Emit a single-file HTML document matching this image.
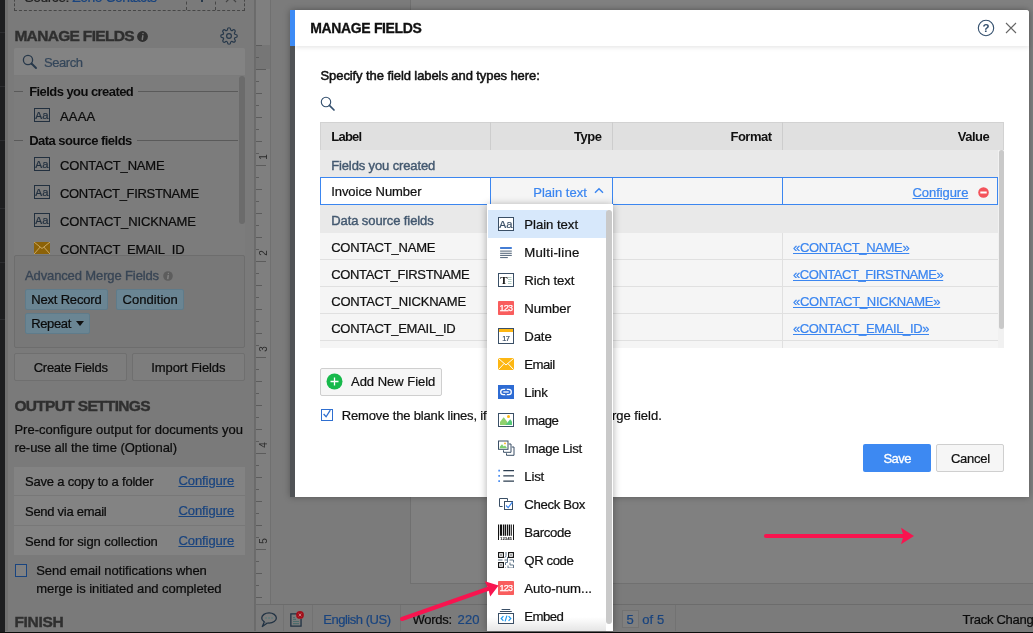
<!DOCTYPE html>
<html lang="en">
<head>
<meta charset="utf-8">
<title>Manage Fields</title>
<style>
*{box-sizing:border-box;margin:0;padding:0}
html,body{width:1033px;height:633px;overflow:hidden}
body{position:relative;background:#7b7b7b;font-family:"Liberation Sans",sans-serif;font-size:14px;color:#000}
#app{position:absolute;left:0;top:0;width:1033px;height:633px;overflow:hidden;will-change:transform}
.a{position:absolute}
.t{position:absolute;white-space:nowrap;line-height:18px}
</style>
</head>
<body>
<div id="app">
<!-- background application (dimmed) -->
<div class="a" style="left:0px;top:0px;width:5px;height:633px;background:#1d1e20"></div>
<div class="a" style="left:0px;top:32px;width:5px;height:1px;background:#2b2c2f"></div>
<div class="a" style="left:0px;top:86px;width:5px;height:1px;background:#2b2c2f"></div>
<div class="a" style="left:0px;top:140px;width:5px;height:1px;background:#2b2c2f"></div>
<div class="a" style="left:0px;top:208px;width:5px;height:1px;background:#2b2c2f"></div>
<div class="a" style="left:0px;top:262px;width:5px;height:1px;background:#2b2c2f"></div>
<div class="a" style="left:0px;top:319px;width:5px;height:1px;background:#2b2c2f"></div>
<div class="a" style="left:5px;top:0px;width:250px;height:631px;background:#7a7a7a;border-right:1px solid #6b6b6b"></div>
<div class="a" style="left:5px;top:0px;width:3px;height:631px;background:#707070"></div>
<div class="a" style="left:14px;top:-20px;width:231px;height:31px;border:1px dashed #474747"></div>
<div class="a" style="left:186px;top:-20px;width:1px;height:30px;border-left:1px dashed #474747"></div>
<div class="a" style="left:215px;top:-20px;width:1px;height:30px;border-left:1px dashed #474747"></div>
<div class="t" style="left:24.40px;top:-12.30px;font-size:14px;letter-spacing:-0.533px;color:#222;-webkit-text-stroke:0.22px;">Source: <span style="color:#19447f">Zoho Contacts</span></div><div class="a" style="left:201px;top:-4px;width:2px;height:6px;background:#27384a"></div>
<svg class="a" style="left:222.5px;top:-5px;" width="16" height="8" viewBox="0 0 16 8"><path d="M3 -3 L13 7 M13 -3 L3 7" stroke="#444" stroke-width="1.2" fill="none"/></svg>
<div class="t" style="left:14.40px;top:26.90px;font-size:15.5px;letter-spacing:-0.678px;font-weight:bold;color:#2f2f2f;-webkit-text-stroke:0.4px">MANAGE FIELDS</div><svg class="a" style="left:136.5px;top:30.5px;" width="11" height="11" viewBox="0 0 11 11"><circle cx="5.5" cy="5.5" r="5.4" fill="#2f2f2f"/><path d="M6 2.600 L6 2.600 M5.800 4.800 L5.300 8.400" stroke="#7a7a7a" stroke-width="1.5" stroke-linecap="round"/></svg>
<svg class="a" style="left:220px;top:27px;" width="18" height="18" viewBox="0 0 24 24"><g fill="none" stroke="#27384a" stroke-width="1.600" stroke-linejoin="round"><circle cx="12" cy="12" r="3.200"/><path d="M19.4 15a1.650 1.650 0 0 0 .33 1.820l.06.06a2 2 0 1 1-2.830 2.830l-.06-.06a1.650 1.650 0 0 0-1.820-.33 1.650 1.650 0 0 0-1 1.510V21a2 2 0 0 1-4 0v-.09A1.650 1.650 0 0 0 9 19.4a1.650 1.650 0 0 0-1.820.33l-.06.06a2 2 0 1 1-2.830-2.830l.06-.06a1.650 1.650 0 0 0 .33-1.820 1.650 1.650 0 0 0-1.510-1H3a2 2 0 0 1 0-4h.09A1.650 1.650 0 0 0 4.600 9a1.650 1.650 0 0 0-.33-1.820l-.06-.06a2 2 0 1 1 2.830-2.830l.06.06a1.650 1.650 0 0 0 1.820.33H9a1.650 1.650 0 0 0 1-1.510V3a2 2 0 0 1 4 0v.09a1.650 1.650 0 0 0 1 1.510 1.650 1.650 0 0 0 1.820-.33l.06-.06a2 2 0 1 1 2.830 2.830l-.06.06a1.650 1.650 0 0 0-.33 1.820V9a1.650 1.650 0 0 0 1.510 1H21a2 2 0 0 1 0 4h-.09a1.650 1.650 0 0 0-1.510 1z"/></g></svg>
<div class="a" style="left:14px;top:48px;width:231px;height:27px;background:#838383;border-radius:2px 2px 0 0"></div>
<div class="a" style="left:14px;top:75px;width:231px;height:1px;background:#7b7b7b"></div>
<svg class="a" style="left:22px;top:54px;" width="16" height="16" viewBox="0 0 16 16"><circle cx="6" cy="6" r="4.600" fill="none" stroke="#27384a" stroke-width="1.300"/><path d="M9.500 9.500 L14 14" stroke="#27384a" stroke-width="1.900" stroke-linecap="round"/></svg>
<div class="t" style="left:44.00px;top:53.70px;font-size:13px;letter-spacing:-0.451px;color:#34465a;-webkit-text-stroke:0.22px;">Search</div><div class="a" style="left:14px;top:76px;width:231px;height:179px;background:#7c7c7c"></div>
<div class="a" style="left:239.2px;top:76px;width:5.5px;height:148px;background:#6b6b6b;border-radius:3px"></div>
<div class="a" style="left:14px;top:91px;width:9px;height:1px;background:#5a5a5a"></div>
<div class="a" style="left:138px;top:91px;width:100px;height:1px;background:#5a5a5a"></div>
<div class="t" style="left:29.20px;top:82.70px;font-size:13px;letter-spacing:-0.564px;font-weight:bold;color:#0b0b0b;-webkit-text-stroke:0">Fields you created</div><div class="a" style="left:14px;top:140px;width:9px;height:1px;background:#5a5a5a"></div>
<div class="a" style="left:137px;top:140px;width:101px;height:1px;background:#5a5a5a"></div>
<div class="t" style="left:29.20px;top:131.70px;font-size:13px;letter-spacing:-0.522px;font-weight:bold;color:#0b0b0b;">Data source fields</div><svg class="a" style="left:34px;top:108px;" width="16" height="14" viewBox="0 0 16 14"><rect x=".5" y=".5" width="15" height="13" fill="none" stroke="#22303f" stroke-width="1"/><text x="1.300" y="10.700" font-family="Liberation Mono, monospace" font-size="11.500" fill="#22303f" stroke="#22303f" stroke-width=".2" letter-spacing="-0.2">Aa</text></svg>
<div class="t" style="left:60.00px;top:107.70px;font-size:13px;letter-spacing:0.203px;color:#0b0b0b;-webkit-text-stroke:0.22px;">AAAA</div><svg class="a" style="left:34px;top:157px;" width="16" height="14" viewBox="0 0 16 14"><rect x=".5" y=".5" width="15" height="13" fill="none" stroke="#22303f" stroke-width="1"/><text x="1.300" y="10.700" font-family="Liberation Mono, monospace" font-size="11.500" fill="#22303f" stroke="#22303f" stroke-width=".2" letter-spacing="-0.2">Aa</text></svg>
<div class="t" style="left:60.00px;top:156.70px;font-size:13px;letter-spacing:-0.180px;color:#0b0b0b;-webkit-text-stroke:0.22px;">CONTACT_NAME</div><svg class="a" style="left:34px;top:185px;" width="16" height="14" viewBox="0 0 16 14"><rect x=".5" y=".5" width="15" height="13" fill="none" stroke="#22303f" stroke-width="1"/><text x="1.300" y="10.700" font-family="Liberation Mono, monospace" font-size="11.500" fill="#22303f" stroke="#22303f" stroke-width=".2" letter-spacing="-0.2">Aa</text></svg>
<div class="t" style="left:60.00px;top:184.70px;font-size:13px;letter-spacing:-0.319px;color:#0b0b0b;-webkit-text-stroke:0.22px;">CONTACT_FIRSTNAME</div><svg class="a" style="left:34px;top:213px;" width="16" height="14" viewBox="0 0 16 14"><rect x=".5" y=".5" width="15" height="13" fill="none" stroke="#22303f" stroke-width="1"/><text x="1.300" y="10.700" font-family="Liberation Mono, monospace" font-size="11.500" fill="#22303f" stroke="#22303f" stroke-width=".2" letter-spacing="-0.2">Aa</text></svg>
<div class="t" style="left:60.00px;top:212.70px;font-size:13px;letter-spacing:-0.120px;color:#0b0b0b;-webkit-text-stroke:0.22px;">CONTACT_NICKNAME</div><svg class="a" style="left:34px;top:242px;" width="16" height="12" viewBox="0 0 16 12"><rect width="16" height="12" fill="#8c6208"/><path d="M0 0 L8 6.500 L16 0 M0 12 L6.200 5 M16 12 L9.800 5" stroke="#c9a866" stroke-width="1" fill="none"/></svg>
<div class="t" style="left:60.00px;top:240.70px;font-size:13px;letter-spacing:-0.253px;color:#0b0b0b;-webkit-text-stroke:0.22px;">CONTACT_EMAIL_ID</div><div class="a" style="left:14px;top:255px;width:231px;height:93px;background:#787878;border:1px solid #6d6d6d;border-radius:2px"></div>
<div class="t" style="left:25.00px;top:267.20px;font-size:13px;letter-spacing:-0.123px;color:#384555;-webkit-text-stroke:0.35px #384555">Advanced Merge Fields</div><svg class="a" style="left:162.5px;top:270.5px;" width="10" height="10" viewBox="0 0 10 10"><circle cx="5" cy="5" r="4.800" fill="#5d5d5d"/><path d="M5.400 2.300 L5.400 2.300 M5.200 4.300 L4.800 7.600" stroke="#8a8a8a" stroke-width="1.300" stroke-linecap="round"/></svg>
<div class="a" style="left:25px;top:289px;width:83px;height:21px;background:#6a8593;border:1px solid #5f7b8a;border-radius:2px"></div>
<div class="t" style="left:31.20px;top:291.20px;font-size:13px;letter-spacing:-0.177px;color:#0b0b0b;-webkit-text-stroke:0.22px;">Next Record</div><div class="a" style="left:116px;top:289px;width:68px;height:21px;background:#6a8593;border:1px solid #5f7b8a;border-radius:2px"></div>
<div class="t" style="left:122.50px;top:291.20px;font-size:13px;letter-spacing:0.051px;color:#0b0b0b;-webkit-text-stroke:0.22px;">Condition</div><div class="a" style="left:25px;top:313px;width:65px;height:21px;background:#6a8593;border:1px solid #5f7b8a;border-radius:2px"></div>
<div class="t" style="left:31.20px;top:315.20px;font-size:13px;letter-spacing:-0.354px;color:#0b0b0b;-webkit-text-stroke:0.22px;">Repeat</div><svg class="a" style="left:76.3px;top:321.3px;" width="8" height="5" viewBox="0 0 8 5"><path d="M0 0 H8 L4 5 Z" fill="#111"/></svg>
<div class="a" style="left:14px;top:353px;width:112.5px;height:28px;background:#7d7d7d;border:1px solid #6f6f6f;border-radius:2px"></div>
<div class="t" style="left:33.70px;top:359.20px;font-size:13px;letter-spacing:-0.255px;color:#0b0b0b;-webkit-text-stroke:0.22px;">Create Fields</div><div class="a" style="left:132px;top:353px;width:113px;height:28px;background:#7d7d7d;border:1px solid #6f6f6f;border-radius:2px"></div>
<div class="t" style="left:151.20px;top:359.20px;font-size:13px;letter-spacing:-0.065px;color:#0b0b0b;-webkit-text-stroke:0.22px;">Import Fields</div><div class="t" style="left:14.40px;top:396.90px;font-size:15.5px;letter-spacing:-0.670px;font-weight:bold;color:#2f2f2f;-webkit-text-stroke:0.4px">OUTPUT SETTINGS</div><div class="t" style="left:14.40px;top:421.20px;font-size:13px;letter-spacing:0.004px;color:#0b0b0b;-webkit-text-stroke:0.22px;">Pre-configure output for documents you</div><div class="t" style="left:14.40px;top:439.20px;font-size:13px;letter-spacing:-0.047px;color:#0b0b0b;-webkit-text-stroke:0.22px;">re-use all the time (Optional)</div><div class="a" style="left:14px;top:467px;width:231px;height:88px;background:#838383"></div>
<div class="a" style="left:14px;top:495px;width:231px;height:1px;background:#787878"></div>
<div class="a" style="left:14px;top:525px;width:231px;height:1px;background:#787878"></div>
<div class="t" style="left:25.00px;top:472.70px;font-size:13px;letter-spacing:-0.204px;color:#0b0b0b;-webkit-text-stroke:0.22px;">Save a copy to a folder</div><div class="t" style="left:178.40px;top:472.20px;font-size:13px;letter-spacing:-0.064px;color:#19447f;-webkit-text-stroke:0.22px;text-decoration:underline">Configure</div><div class="t" style="left:25.00px;top:502.70px;font-size:13px;letter-spacing:-0.270px;color:#0b0b0b;-webkit-text-stroke:0.22px;">Send via email</div><div class="t" style="left:178.40px;top:502.20px;font-size:13px;letter-spacing:-0.064px;color:#19447f;-webkit-text-stroke:0.22px;text-decoration:underline">Configure</div><div class="t" style="left:25.00px;top:532.70px;font-size:13px;letter-spacing:-0.068px;color:#0b0b0b;-webkit-text-stroke:0.22px;">Send for sign collection</div><div class="t" style="left:178.40px;top:532.20px;font-size:13px;letter-spacing:-0.064px;color:#19447f;-webkit-text-stroke:0.22px;text-decoration:underline">Configure</div><div class="a" style="left:14.5px;top:564px;width:12.5px;height:12.5px;border:1px solid #19447f;background:#818181"></div>
<div class="t" style="left:36.20px;top:562.20px;font-size:13px;letter-spacing:-0.048px;color:#0b0b0b;-webkit-text-stroke:0.22px;">Send email notifications when</div><div class="t" style="left:36.20px;top:580.20px;font-size:13px;letter-spacing:-0.058px;color:#0b0b0b;-webkit-text-stroke:0.22px;">merge is initiated and completed</div><div class="t" style="left:14.40px;top:612.90px;font-size:15.5px;letter-spacing:-0.302px;font-weight:bold;color:#2f2f2f;-webkit-text-stroke:0.4px">FINISH</div><div class="a" style="left:255px;top:0px;width:16px;height:604px;background:#7f7f7f;border-left:1px solid #6c6c6c;border-right:1px solid #707070"></div>
<div class="a" style="left:256px;top:45px;width:14px;height:24px;background:#767676"></div>
<div class="a" style="left:256px;top:44.5px;width:6px;height:1px;background:#5c5c5c"></div>
<div class="a" style="left:256px;top:56.5px;width:3px;height:1px;background:#5c5c5c"></div>
<div class="a" style="left:256px;top:68.5px;width:10px;height:1px;background:#5c5c5c"></div>
<div class="a" style="left:256px;top:80.5px;width:3px;height:1px;background:#5c5c5c"></div>
<div class="a" style="left:256px;top:92.5px;width:6px;height:1px;background:#5c5c5c"></div>
<div class="a" style="left:256px;top:104.5px;width:3px;height:1px;background:#5c5c5c"></div>
<div class="a" style="left:256px;top:116.5px;width:6px;height:1px;background:#5c5c5c"></div>
<div class="a" style="left:256px;top:128.5px;width:3px;height:1px;background:#5c5c5c"></div>
<div class="a" style="left:256px;top:140.5px;width:6px;height:1px;background:#5c5c5c"></div>
<div class="a" style="left:256px;top:152.5px;width:3px;height:1px;background:#5c5c5c"></div>
<div class="a" style="left:256px;top:164.5px;width:10px;height:1px;background:#5c5c5c"></div>
<div class="a" style="left:256px;top:176.5px;width:3px;height:1px;background:#5c5c5c"></div>
<div class="a" style="left:256px;top:188.5px;width:6px;height:1px;background:#5c5c5c"></div>
<div class="a" style="left:256px;top:200.5px;width:3px;height:1px;background:#5c5c5c"></div>
<div class="a" style="left:256px;top:212.5px;width:6px;height:1px;background:#5c5c5c"></div>
<div class="a" style="left:256px;top:224.5px;width:3px;height:1px;background:#5c5c5c"></div>
<div class="a" style="left:256px;top:236.5px;width:6px;height:1px;background:#5c5c5c"></div>
<div class="a" style="left:256px;top:248.5px;width:3px;height:1px;background:#5c5c5c"></div>
<div class="a" style="left:256px;top:260.5px;width:10px;height:1px;background:#5c5c5c"></div>
<div class="a" style="left:256px;top:272.5px;width:3px;height:1px;background:#5c5c5c"></div>
<div class="a" style="left:256px;top:284.5px;width:6px;height:1px;background:#5c5c5c"></div>
<div class="a" style="left:256px;top:296.5px;width:3px;height:1px;background:#5c5c5c"></div>
<div class="a" style="left:256px;top:308.5px;width:6px;height:1px;background:#5c5c5c"></div>
<div class="a" style="left:256px;top:320.5px;width:3px;height:1px;background:#5c5c5c"></div>
<div class="a" style="left:256px;top:332.5px;width:6px;height:1px;background:#5c5c5c"></div>
<div class="a" style="left:256px;top:344.5px;width:3px;height:1px;background:#5c5c5c"></div>
<div class="a" style="left:256px;top:356.5px;width:10px;height:1px;background:#5c5c5c"></div>
<div class="a" style="left:256px;top:368.5px;width:3px;height:1px;background:#5c5c5c"></div>
<div class="a" style="left:256px;top:380.5px;width:6px;height:1px;background:#5c5c5c"></div>
<div class="a" style="left:256px;top:392.5px;width:3px;height:1px;background:#5c5c5c"></div>
<div class="a" style="left:256px;top:404.5px;width:6px;height:1px;background:#5c5c5c"></div>
<div class="a" style="left:256px;top:416.5px;width:3px;height:1px;background:#5c5c5c"></div>
<div class="a" style="left:256px;top:428.5px;width:6px;height:1px;background:#5c5c5c"></div>
<div class="a" style="left:256px;top:440.5px;width:3px;height:1px;background:#5c5c5c"></div>
<div class="a" style="left:256px;top:452.5px;width:10px;height:1px;background:#5c5c5c"></div>
<div class="a" style="left:256px;top:464.5px;width:3px;height:1px;background:#5c5c5c"></div>
<div class="a" style="left:256px;top:476.5px;width:6px;height:1px;background:#5c5c5c"></div>
<div class="a" style="left:256px;top:488.5px;width:3px;height:1px;background:#5c5c5c"></div>
<div class="a" style="left:256px;top:500.5px;width:6px;height:1px;background:#5c5c5c"></div>
<div class="a" style="left:256px;top:512.5px;width:3px;height:1px;background:#5c5c5c"></div>
<div class="a" style="left:256px;top:524.5px;width:6px;height:1px;background:#5c5c5c"></div>
<div class="a" style="left:256px;top:536.5px;width:3px;height:1px;background:#5c5c5c"></div>
<div class="a" style="left:256px;top:548.5px;width:10px;height:1px;background:#5c5c5c"></div>
<div class="a" style="left:256px;top:560.5px;width:3px;height:1px;background:#5c5c5c"></div>
<div class="a" style="left:256px;top:572.5px;width:6px;height:1px;background:#5c5c5c"></div>
<div class="a" style="left:256px;top:584.5px;width:3px;height:1px;background:#5c5c5c"></div>
<div class="a" style="left:256px;top:596.5px;width:6px;height:1px;background:#5c5c5c"></div>
<div class="a" style="left:257px;top:149.5px;width:14px;height:14px;font-size:10px;line-height:14px;text-align:center;color:#2c2c2c;transform:rotate(-90deg)">1</div>
<div class="a" style="left:257px;top:245.5px;width:14px;height:14px;font-size:10px;line-height:14px;text-align:center;color:#2c2c2c;transform:rotate(-90deg)">2</div>
<div class="a" style="left:257px;top:341.5px;width:14px;height:14px;font-size:10px;line-height:14px;text-align:center;color:#2c2c2c;transform:rotate(-90deg)">3</div>
<div class="a" style="left:257px;top:437.5px;width:14px;height:14px;font-size:10px;line-height:14px;text-align:center;color:#2c2c2c;transform:rotate(-90deg)">4</div>
<div class="a" style="left:257px;top:533.5px;width:14px;height:14px;font-size:10px;line-height:14px;text-align:center;color:#2c2c2c;transform:rotate(-90deg)">5</div>
<div class="a" style="left:410px;top:-10px;width:700px;height:594px;background:#808080;border:1px solid #707070"></div>
<div class="a" style="left:255px;top:604px;width:778px;height:27px;background:#7b7b7b;border-top:1px solid #6c6c6c;border-left:1px solid #6c6c6c"></div>
<div class="a" style="left:283px;top:605px;width:1px;height:26px;background:#727272"></div>
<div class="a" style="left:312px;top:605px;width:1px;height:26px;background:#727272"></div>
<div class="a" style="left:400px;top:605px;width:1px;height:26px;background:#727272"></div>
<div class="a" style="left:675px;top:605px;width:1px;height:26px;background:#727272"></div>
<svg class="a" style="left:260px;top:610px;" width="18" height="18" viewBox="0 0 18 18"><ellipse cx="9.050" cy="7.950" rx="7.300" ry="5.100" fill="none" stroke="#213243" stroke-width="1.300"/><path d="M4.300 11.900 L2.300 16.500 L7.400 13" fill="#7b7b7b" stroke="#213243" stroke-width="1.300" stroke-linejoin="round"/><path d="M4.900 11.300 L7.600 12.300" stroke="#7b7b7b" stroke-width="1.600"/><path d="M5.300 8 H6.800 M8.300 8 H9.800 M11.300 8 H12.800" stroke="#587878" stroke-width="1.500"/></svg>
<svg class="a" style="left:289px;top:609px;" width="18" height="19" viewBox="0 0 18 19"><path d="M8 4.850 H1.850 V17.150 H12.050 V10" fill="none" stroke="#213243" stroke-width="1.300"/><path d="M4 8.500 H6 M4 10.400 H7 M4 12.500 H10 M4 14.600 H10" stroke="#4c6c6c" stroke-width="1.100"/><circle cx="11" cy="5.900" r="3.900" fill="#a30e1a"/><path d="M9.700 4.600 L12.300 7.200 M12.300 4.600 L9.700 7.200" stroke="#c88" stroke-width="1"/></svg>
<div class="t" style="left:323.20px;top:610.70px;font-size:13px;letter-spacing:-0.472px;color:#19447f;-webkit-text-stroke:0.22px;">English (US)</div><div class="t" style="left:412.50px;top:610.70px;font-size:13px;letter-spacing:-0.273px;color:#0b0b0b;-webkit-text-stroke:0.22px;">Words:</div><div class="t" style="left:457.50px;top:610.70px;font-size:13px;letter-spacing:0.199px;color:#19447f;-webkit-text-stroke:0.22px;">220</div><div class="a" style="left:621.5px;top:610px;width:17px;height:18px;border:1px solid #727272;background:#7f7f7f"></div>
<div class="t" style="left:626.50px;top:610.70px;font-size:13px;letter-spacing:0.266px;color:#19447f;-webkit-text-stroke:0.22px;">5</div><div class="t" style="left:642.20px;top:610.70px;font-size:13px;letter-spacing:0.153px;color:#19447f;-webkit-text-stroke:0.22px;">of 5</div><div class="t" style="left:962.50px;top:610.70px;font-size:13px;letter-spacing:-0.282px;color:#0b0b0b;-webkit-text-stroke:0.22px;">Track Changes</div><div class="a" style="left:0px;top:631.5px;width:1033px;height:2px;background:#0c0c0c"></div>
<!-- modal dialog -->
<div class="a" style="left:290px;top:10px;width:739px;height:487px;background:#fff;border-radius:0 3px 0 0;box-shadow:0 0 7px rgba(0,0,0,.3)"></div>
<div class="a" style="left:290px;top:10px;width:5px;height:487px;background:#505356"></div>
<div class="a" style="left:295px;top:10px;width:734px;height:36px;background:#fff;border-radius:0 3px 0 0;box-shadow:0 1px 5px rgba(0,0,0,.12)"></div>
<div class="a" style="left:290px;top:10px;width:5px;height:36px;background:#3d8bf5"></div>
<div class="t" style="left:310.30px;top:18.50px;font-size:14px;letter-spacing:-0.361px;font-weight:bold;color:#111;-webkit-text-stroke:0.3px">MANAGE FIELDS</div><svg class="a" style="left:977px;top:19px;" width="18" height="18" viewBox="0 0 18 18"><circle cx="9" cy="9" r="7.700" fill="none" stroke="#34506e" stroke-width="1.100"/><text x="9" y="13" text-anchor="middle" font-family="Liberation Sans, sans-serif" font-size="11.500" font-weight="bold" fill="#34506e">?</text></svg>
<svg class="a" style="left:1004px;top:21px;" width="14" height="14" viewBox="0 0 14 14"><path d="M2 2 L12 12 M12 2 L2 12" stroke="#666" stroke-width="1.100" fill="none"/></svg>
<div class="t" style="left:320.50px;top:67.20px;font-size:13px;letter-spacing:-0.085px;color:#111;-webkit-text-stroke:0.5px #111">Specify the field labels and types here:</div><svg class="a" style="left:320px;top:96px;" width="16" height="16" viewBox="0 0 16 16"><circle cx="6" cy="6" r="4.700" fill="none" stroke="#34506e" stroke-width="1.100"/><path d="M9.400 9.400 L14 14" stroke="#34506e" stroke-width="1.700" stroke-linecap="round"/></svg>
<div class="a" style="left:320px;top:122px;width:684px;height:28px;background:#e0e0e0;border:1px solid #d2d2d2;border-bottom:none"></div>
<div class="a" style="left:490px;top:122px;width:1px;height:28px;background:#cdcdcd"></div>
<div class="a" style="left:612px;top:122px;width:1px;height:28px;background:#cdcdcd"></div>
<div class="a" style="left:782px;top:122px;width:1px;height:28px;background:#cdcdcd"></div>
<div class="t" style="left:331.20px;top:127.70px;font-size:13px;letter-spacing:-0.734px;font-weight:bold;color:#111;">Label</div><div class="t" style="left:574.03px;top:127.70px;font-size:13px;letter-spacing:-0.473px;font-weight:bold;color:#111;">Type</div><div class="t" style="left:730.49px;top:127.70px;font-size:13px;letter-spacing:-0.510px;font-weight:bold;color:#111;">Format</div><div class="t" style="left:957.81px;top:127.70px;font-size:13px;letter-spacing:-0.494px;font-weight:bold;color:#111;">Value</div><div class="a" style="left:320px;top:150px;width:684px;height:198px;background:#f0f0f0"></div>
<div class="a" style="left:320px;top:150px;width:1px;height:198px;background:#dedede"></div>
<div class="a" style="left:320px;top:150px;width:678px;height:27px;background:#e9e9e9"></div>
<div class="t" style="left:331.20px;top:156.70px;font-size:13px;letter-spacing:-0.124px;color:#43586f;-webkit-text-stroke:0.4px">Fields you created</div><div class="a" style="left:320px;top:205px;width:678px;height:28px;background:#e9e9e9"></div>
<div class="t" style="left:331.20px;top:211.70px;font-size:13px;letter-spacing:-0.087px;color:#43586f;-webkit-text-stroke:0.4px">Data source fields</div><div class="a" style="left:320px;top:177px;width:678px;height:28px;background:#f5f5f5;border:1px solid #3b86f0"></div>
<div class="a" style="left:321px;top:178px;width:169px;height:26px;background:#fff"></div>
<div class="a" style="left:490px;top:177px;width:1px;height:28px;background:#3b86f0"></div>
<div class="a" style="left:612px;top:177px;width:1px;height:28px;background:#3b86f0"></div>
<div class="a" style="left:782px;top:177px;width:1px;height:28px;background:#3b86f0"></div>
<div class="t" style="left:331.20px;top:183.20px;font-size:13px;letter-spacing:-0.053px;color:#111;-webkit-text-stroke:0.22px;">Invoice Number</div><div class="t" style="left:533.30px;top:184.20px;font-size:13px;letter-spacing:0.002px;color:#3b86f0;-webkit-text-stroke:0.22px;">Plain text</div><svg class="a" style="left:594px;top:187px;" width="10" height="7" viewBox="0 0 10 7"><path d="M1 5.800 L5 1.700 L9 5.800" fill="none" stroke="#3b86f0" stroke-width="1.400"/></svg>
<div class="t" style="left:912.50px;top:184.00px;font-size:13px;letter-spacing:-0.064px;color:#3b86f0;-webkit-text-stroke:0.22px;text-decoration:underline">Configure</div><svg class="a" style="left:977.5px;top:186.5px;" width="11" height="11" viewBox="0 0 11 11"><circle cx="5.500" cy="5.500" r="5.300" fill="#f4545c"/><rect x="2.300" y="4.500" width="6.400" height="2" fill="#fff"/></svg>
<div class="a" style="left:320px;top:233px;width:678px;height:27px;background:#f5f5f5;border-bottom:1px solid #e0e0e0"></div>
<div class="a" style="left:490px;top:233px;width:1px;height:27px;background:#e0e0e0"></div>
<div class="a" style="left:612px;top:233px;width:1px;height:27px;background:#e0e0e0"></div>
<div class="a" style="left:782px;top:233px;width:1px;height:27px;background:#e0e0e0"></div>
<div class="t" style="left:331.20px;top:239.00px;font-size:13px;letter-spacing:-0.221px;color:#111;-webkit-text-stroke:0.22px;">CONTACT_NAME</div><div class="t" style="left:793.00px;top:239.00px;font-size:13px;letter-spacing:-0.345px;color:#3b86f0;-webkit-text-stroke:0.22px;text-decoration:underline">«CONTACT_NAME»</div><div class="a" style="left:320px;top:260px;width:678px;height:27px;background:#f5f5f5;border-bottom:1px solid #e0e0e0"></div>
<div class="a" style="left:490px;top:260px;width:1px;height:27px;background:#e0e0e0"></div>
<div class="a" style="left:612px;top:260px;width:1px;height:27px;background:#e0e0e0"></div>
<div class="a" style="left:782px;top:260px;width:1px;height:27px;background:#e0e0e0"></div>
<div class="t" style="left:331.20px;top:266.00px;font-size:13px;letter-spacing:-0.354px;color:#111;-webkit-text-stroke:0.22px;">CONTACT_FIRSTNAME</div><div class="t" style="left:793.00px;top:266.00px;font-size:13px;letter-spacing:-0.446px;color:#3b86f0;-webkit-text-stroke:0.22px;text-decoration:underline">«CONTACT_FIRSTNAME»</div><div class="a" style="left:320px;top:287px;width:678px;height:27px;background:#f5f5f5;border-bottom:1px solid #e0e0e0"></div>
<div class="a" style="left:490px;top:287px;width:1px;height:27px;background:#e0e0e0"></div>
<div class="a" style="left:612px;top:287px;width:1px;height:27px;background:#e0e0e0"></div>
<div class="a" style="left:782px;top:287px;width:1px;height:27px;background:#e0e0e0"></div>
<div class="t" style="left:331.20px;top:293.00px;font-size:13px;letter-spacing:-0.182px;color:#111;-webkit-text-stroke:0.22px;">CONTACT_NICKNAME</div><div class="t" style="left:793.00px;top:293.00px;font-size:13px;letter-spacing:-0.277px;color:#3b86f0;-webkit-text-stroke:0.22px;text-decoration:underline">«CONTACT_NICKNAME»</div><div class="a" style="left:320px;top:314px;width:678px;height:27px;background:#f5f5f5;border-bottom:1px solid #e0e0e0"></div>
<div class="a" style="left:490px;top:314px;width:1px;height:27px;background:#e0e0e0"></div>
<div class="a" style="left:612px;top:314px;width:1px;height:27px;background:#e0e0e0"></div>
<div class="a" style="left:782px;top:314px;width:1px;height:27px;background:#e0e0e0"></div>
<div class="t" style="left:331.20px;top:320.00px;font-size:13px;letter-spacing:-0.259px;color:#111;-webkit-text-stroke:0.22px;">CONTACT_EMAIL_ID</div><div class="t" style="left:793.00px;top:320.00px;font-size:13px;letter-spacing:-0.378px;color:#3b86f0;-webkit-text-stroke:0.22px;text-decoration:underline">«CONTACT_EMAIL_ID»</div><div class="a" style="left:320px;top:341px;width:678px;height:7px;background:#f5f5f5"></div>
<div class="a" style="left:490px;top:341px;width:1px;height:7px;background:#e0e0e0"></div>
<div class="a" style="left:612px;top:341px;width:1px;height:7px;background:#e0e0e0"></div>
<div class="a" style="left:782px;top:341px;width:1px;height:7px;background:#e0e0e0"></div>
<div class="a" style="left:998px;top:150px;width:6px;height:198px;background:#f1f1f1"></div>
<div class="a" style="left:998.5px;top:150px;width:5px;height:179px;background:#c9c9c9;border-radius:3px"></div>
<div class="a" style="left:320px;top:368px;width:122px;height:28px;background:#f6f6f6;border:1px solid #cfcfcf;border-radius:2px"></div>
<svg class="a" style="left:326.3px;top:373.1px;" width="17" height="17" viewBox="0 0 17 17"><circle cx="8.500" cy="8.500" r="8" fill="#17b94b"/><path d="M8.500 4.500 V12.500 M4.500 8.500 H12.500" stroke="#fff" stroke-width="1.300"/></svg>
<div class="t" style="left:351.00px;top:373.40px;font-size:13px;letter-spacing:-0.019px;color:#111;-webkit-text-stroke:0.22px;">Add New Field</div><div class="a" style="left:320.5px;top:409px;width:12.5px;height:11.8px;border:1px solid #2f6fd0;background:#fff"></div>
<svg class="a" style="left:322px;top:409px;" width="10" height="10" viewBox="0 0 10 10"><path d="M1.600 5 L4.100 7.800 L8.300 1.200" fill="none" stroke="#2f6fd0" stroke-width="1.300"/></svg>
<div class="t" style="left:341.80px;top:407.20px;font-size:13px;letter-spacing:-0.160px;color:#111;-webkit-text-stroke:0.22px;">Remove the blank lines, if</div><div class="t" style="left:490.00px;top:407.20px;font-size:13px;letter-spacing:-1.304px;color:#111;-webkit-text-stroke:0.22px;">any, after replacing the</div><div class="t" style="left:593.88px;top:407.20px;font-size:13px;letter-spacing:0.000px;color:#111;-webkit-text-stroke:0.22px;">merge field.</div><div class="a" style="left:863px;top:444px;width:68px;height:28px;background:#3d89f2;border-radius:2px"></div>
<div class="t" style="left:883.50px;top:449.70px;font-size:13px;letter-spacing:-0.585px;color:#fff;-webkit-text-stroke:0.3px #fff">Save</div><div class="a" style="left:936px;top:444px;width:68px;height:28px;background:#f6f6f6;border:1px solid #cfcfcf;border-radius:2px"></div>
<div class="t" style="left:951.00px;top:449.70px;font-size:13px;letter-spacing:-0.278px;color:#111;-webkit-text-stroke:0.22px;">Cancel</div><!-- type dropdown -->
<div class="a" style="left:487px;top:204px;width:126px;height:427px;background:#fff;box-shadow:0 1px 8px rgba(0,0,0,.32)"></div>
<div class="a" style="left:488px;top:210px;width:118.5px;height:28px;background:#d7e8fb"></div>
<div class="a" style="left:487px;top:617px;width:119px;height:14px;background:linear-gradient(rgba(0,0,0,0),rgba(0,0,0,.1))"></div>
<div class="a" style="left:606.2px;top:210px;width:5.5px;height:413.5px;background:#c9c9c9;border-radius:3px"></div>
<div class="t" style="left:524.30px;top:216.00px;font-size:13.2px;letter-spacing:-0.055px;color:#111;-webkit-text-stroke:0.22px;">Plain text</div><svg class="a" style="left:498px;top:217px;" width="16" height="14" viewBox="0 0 16 14"><rect x=".5" y=".5" width="15" height="13" fill="#fff" stroke="#3a4f66" stroke-width="1"/><text x="1.300" y="10.700" font-family="Liberation Mono, monospace" font-size="11.500" fill="#3a4f66" stroke="#3a4f66" stroke-width=".2" letter-spacing="-0.2">Aa</text></svg>
<div class="t" style="left:524.30px;top:244.03px;font-size:13.2px;letter-spacing:0.253px;color:#111;-webkit-text-stroke:0.22px;">Multi-line</div><svg class="a" style="left:498px;top:244px;" width="16" height="16" viewBox="0 0 16 16"><path d="M2.100 4 H13.800" stroke="#2f6fd0" stroke-width="1.800"/><path d="M2.100 7.100 H13.800 M2.100 9.300 H13.800 M2.100 11.400 H13.800 M2.100 13.600 H9.800" stroke="#3a4f66" stroke-width=".9"/></svg>
<div class="t" style="left:524.30px;top:272.06px;font-size:13.2px;letter-spacing:-0.157px;color:#111;-webkit-text-stroke:0.22px;">Rich text</div><svg class="a" style="left:498px;top:272px;" width="16" height="16" viewBox="0 0 16 16"><rect x=".5" y="1.500" width="15" height="13" fill="#fff" stroke="#3a4f66"/><text x="2.200" y="12.200" font-family="Liberation Serif, serif" font-weight="bold" font-size="11" fill="#111">T</text><path d="M10 5.500 H13.500 M10 7.500 H13.500 M10 9.500 H13.500 M10 11.500 H13.500" stroke="#9fc2b6" stroke-width=".8"/></svg>
<div class="t" style="left:524.30px;top:300.09px;font-size:13.2px;letter-spacing:-0.068px;color:#111;-webkit-text-stroke:0.22px;">Number</div><svg class="a" style="left:498px;top:300px;" width="16" height="16" viewBox="0 0 16 16"><rect x="0" y="1" width="16" height="14" rx=".8" fill="#f95d5d"/><text x="8" y="11.300" text-anchor="middle" font-family="Liberation Sans, sans-serif" font-size="9" fill="#fff" stroke="#fff" stroke-width=".25" letter-spacing="-0.75">123</text></svg>
<div class="t" style="left:524.30px;top:328.12px;font-size:13.2px;letter-spacing:-0.140px;color:#111;-webkit-text-stroke:0.22px;">Date</div><svg class="a" style="left:498px;top:328px;" width="16" height="16" viewBox="0 0 16 16"><rect x=".5" y=".5" width="15" height="15" fill="#fff" stroke="#3a4f66"/><rect x="1" y="1" width="14" height="3" fill="#fdb713"/><text x="7.800" y="13" text-anchor="middle" font-family="Liberation Sans, sans-serif" font-size="7.500" fill="#3a4f66" stroke="#3a4f66" stroke-width=".2" letter-spacing="-0.5">17</text></svg>
<div class="t" style="left:524.30px;top:356.15px;font-size:13.2px;letter-spacing:-0.537px;color:#111;-webkit-text-stroke:0.22px;">Email</div><svg class="a" style="left:498px;top:356px;" width="16" height="16" viewBox="0 0 16 16"><rect x="0" y="2" width="16" height="12" fill="#fdb713"/><path d="M.3 2.300 L8 9 L15.700 2.300 M.3 13.700 L6 7.600 M15.700 13.700 L10 7.600" stroke="#fff" stroke-width="1" fill="none"/></svg>
<div class="t" style="left:524.30px;top:384.18px;font-size:13.2px;letter-spacing:-0.226px;color:#111;-webkit-text-stroke:0.22px;">Link</div><svg class="a" style="left:498px;top:384px;" width="16" height="16" viewBox="0 0 16 16"><rect x="0" y="1" width="16" height="14" fill="#2d6bd3"/><rect x="2.700" y="5.400" width="10.600" height="5.200" rx="2.600" fill="none" stroke="#fff" stroke-width="1.300"/><path d="M5.300 8 H10.700" stroke="#fff" stroke-width="1.300"/><path d="M8 4.500 V6.300 M8 9.700 V11.500" stroke="#2d6bd3" stroke-width="1.600"/></svg>
<div class="t" style="left:524.30px;top:412.21px;font-size:13.2px;letter-spacing:-0.531px;color:#111;-webkit-text-stroke:0.22px;">Image</div><svg class="a" style="left:498px;top:412px;" width="16" height="16" viewBox="0 0 16 16"><rect x=".5" y="1.500" width="15" height="13" fill="#fff" stroke="#3a4f66"/><path d="M2 13 L2 10 L5.700 5.200 L9.200 9.800 L9.200 13 Z" fill="#8fd16d"/><path d="M7.300 13 L12.200 7.200 L14 9.500 L14 13 Z" fill="#56c878"/><circle cx="10.500" cy="4.400" r="1.500" fill="#fdb713"/></svg>
<div class="t" style="left:524.30px;top:440.24px;font-size:13.2px;letter-spacing:-0.334px;color:#111;-webkit-text-stroke:0.22px;">Image List</div><svg class="a" style="left:498px;top:440px;" width="17" height="17" viewBox="0 0 17 17"><path d="M8.500 13.300 V15.300 H16 V7 H13.800" fill="none" stroke="#3a4f66"/><path d="M5.500 10.300 V12.300 H13 V4 H10.800" fill="none" stroke="#3a4f66"/><rect x=".5" y="1" width="9.500" height="8.300" fill="#fff" stroke="#3a4f66"/><path d="M1.800 8.200 L1.800 6.800 L4 4.200 L5.800 6.500 L7 5.500 L8.700 7.500 L8.700 8.200 Z" fill="#7fcf70"/><circle cx="7" cy="3.400" r=".9" fill="#fdb713"/></svg>
<div class="t" style="left:524.30px;top:468.27px;font-size:13.2px;letter-spacing:-0.183px;color:#111;-webkit-text-stroke:0.22px;">List</div><svg class="a" style="left:498px;top:468px;" width="16" height="16" viewBox="0 0 16 16"><path d="M5.300 2.600 H16 M5.300 7.900 H16 M5.300 13.200 H16" stroke="#2c3e50" stroke-width="1.250"/><path d="M.3 2.600 H2 M.3 7.900 H2 M.3 13.200 H2" stroke="#4a8df0" stroke-width="1.700"/></svg>
<div class="t" style="left:524.30px;top:496.30px;font-size:13.2px;letter-spacing:-0.353px;color:#111;-webkit-text-stroke:0.22px;">Check Box</div><svg class="a" style="left:498px;top:496px;" width="16" height="16" viewBox="0 0 16 16"><path d="M4.600 10.500 H1.500 V2.500 H9.500 V4.800" fill="none" stroke="#3a4f66" stroke-width="1"/><rect x="6.500" y="5.500" width="8" height="8" fill="#fff" stroke="#3a4f66"/><path d="M8 9.500 L10.200 11.700 L14.500 5.900" fill="none" stroke="#3b86f0" stroke-width="1.100"/></svg>
<div class="t" style="left:524.30px;top:524.33px;font-size:13.2px;letter-spacing:-0.346px;color:#111;-webkit-text-stroke:0.22px;">Barcode</div><svg class="a" style="left:498px;top:524px;" width="16" height="17" viewBox="0 0 16 17"><path d="M.5 .5 V16" stroke="#111" stroke-width="1"/><path d="M3 .5 V11.800" stroke="#111" stroke-width="2.300"/><path d="M5.500 .5 V11.800" stroke="#111" stroke-width="1"/><path d="M7.400 .5 V11.800" stroke="#111" stroke-width="1.600"/><path d="M9.600 .5 V11.800" stroke="#111" stroke-width="1.200"/><path d="M11.500 .5 V11.800" stroke="#111" stroke-width="1.200"/><path d="M13.300 .5 V11.800" stroke="#111" stroke-width="1"/><path d="M15.500 .5 V16" stroke="#111" stroke-width="1"/><text x="8" y="16" text-anchor="middle" font-family="Liberation Sans, sans-serif" font-size="4.300" font-weight="bold" fill="#111">12345</text></svg>
<div class="t" style="left:524.30px;top:552.36px;font-size:13.2px;letter-spacing:-0.421px;color:#111;-webkit-text-stroke:0.22px;">QR code</div><svg class="a" style="left:498px;top:552px;" width="16" height="16" viewBox="0 0 16 16"><g fill="none" stroke="#111" stroke-width="1.150"><rect x=".6" y=".6" width="4.800" height="4.800"/><rect x="10.600" y=".6" width="4.800" height="4.800"/><rect x=".6" y="10.600" width="4.800" height="4.800"/></g><g fill="none" stroke="#5f7488" stroke-width="1"><path d="M8 0 V3.500 Q8 5.500 6.500 5.500 M0 8 H4.500 M6.500 8 H9.500 V5 M9.500 8 V10.500 H7.500 V13 M11.500 8 H15.500 V10.500 M12 10.500 V13 H15.500 V16 H10 V13.500 M7.500 15.500 H8"/></g><rect x="2.400" y="2.400" width="1.200" height="1.200" fill="#111"/><rect x="12.400" y="2.400" width="1.200" height="1.200" fill="#111"/><rect x="2.400" y="12.400" width="1.200" height="1.200" fill="#111"/></svg>
<div class="t" style="left:524.30px;top:580.39px;font-size:13.2px;letter-spacing:-0.052px;color:#111;-webkit-text-stroke:0.22px;">Auto-num...</div><svg class="a" style="left:498px;top:580px;" width="16" height="16" viewBox="0 0 16 16"><rect x="0" y="1" width="16" height="14" rx=".8" fill="#f95d5d"/><text x="8" y="11.300" text-anchor="middle" font-family="Liberation Sans, sans-serif" font-size="9" fill="#fff" stroke="#fff" stroke-width=".25" letter-spacing="-0.75">123</text></svg>
<div class="t" style="left:524.30px;top:608.42px;font-size:13.2px;letter-spacing:-0.559px;color:#111;-webkit-text-stroke:0.22px;">Embed</div><svg class="a" style="left:498px;top:608px;" width="16" height="17" viewBox="0 0 16 17"><path d="M3.600 1.500 H12.200 M1.900 3.500 H13.800" stroke="#3a4f66" stroke-width="1"/><rect x=".5" y="5.500" width="15" height="10" fill="#fff" stroke="#3a4f66"/><path d="M5.400 8.200 L3.200 10.500 L5.400 12.800 M10.600 8.200 L12.800 10.500 L10.600 12.800 M8.900 7.600 L7.100 13.400" fill="none" stroke="#1e9af0" stroke-width="1.200"/></svg>
<!-- annotation arrows -->
<svg class="a" style="left:395px;top:575px;" width="120" height="55" viewBox="0 0 120 55"><path d="M7 44 L94 13.500" stroke="#f8144f" stroke-width="4" stroke-linecap="round"/><path d="M103.600 10.500 L89.800 6.200 L93.200 13.700 L95.200 21.600 Z" fill="#f8144f"/></svg>
<svg class="a" style="left:760px;top:522px;" width="160" height="28" viewBox="0 0 160 28"><path d="M6 14 H146" stroke="#f8144f" stroke-width="4.200" stroke-linecap="round"/><path d="M154 14 L141 5.800 L143.500 14 L141 22.200 Z" fill="#f8144f"/></svg>
</div>
</body>
</html>
